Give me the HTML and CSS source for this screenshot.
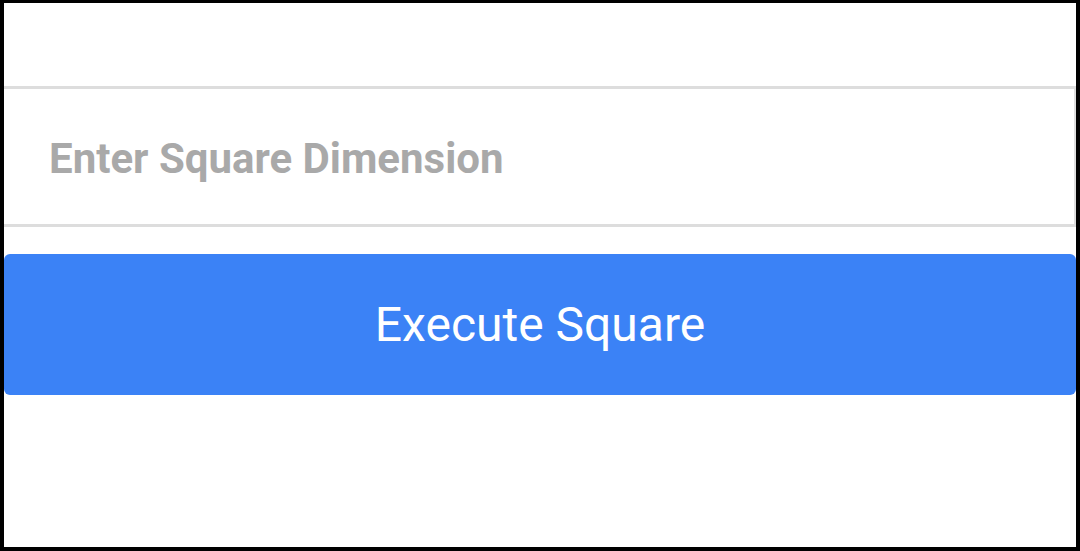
FILE: index.html
```html
<!DOCTYPE html>
<html>
<head>
<meta charset="utf-8">
<link rel="stylesheet" href="styles.css">
</head>
<body>
<div class="frame">
  <div class="form">
    <input class="dim-input" type="text" placeholder="Enter Square Dimension">
    <button class="exec-btn">Execute Square</button>
  </div>
</div>
</body>
</html>
```
FILE: styles.css
```css
html, body {
  margin: 0;
  padding: 0;
  background: #fff;
}
.frame {
  box-sizing: border-box;
  width: 1080px;
  height: 551px;
  border-style: solid;
  border-color: #000;
  border-width: 3px 4px 4px 4px;
  overflow: hidden;
}
.form {
  display: flex;
  flex-direction: column;
  padding-top: 83px;
  gap: 27px;
}
.dim-input {
  box-sizing: border-box;
  height: 141px;
  width: 100%;
  margin: 0;
  border-style: solid;
  border-color: #dddddd;
  border-width: 3px 2px 3px 0;
  padding: 3px 0 0 45px;
  font-family: Roboto, "Noto Sans", sans-serif;
  font-weight: 700;
  font-size: 42px;
  color: #333;
  outline: none;
  background: #fff;
}
.dim-input::placeholder {
  color: #a9a9a9;
  opacity: 1;
}
.exec-btn {
  box-sizing: border-box;
  height: 141px;
  width: 100%;
  margin: 0;
  border: none;
  border-radius: 6px;
  background: #3b82f6;
  color: #fff;
  font-family: Roboto, "Noto Sans", sans-serif;
  font-weight: 400;
  font-size: 48px;
  padding: 0;
}
```
